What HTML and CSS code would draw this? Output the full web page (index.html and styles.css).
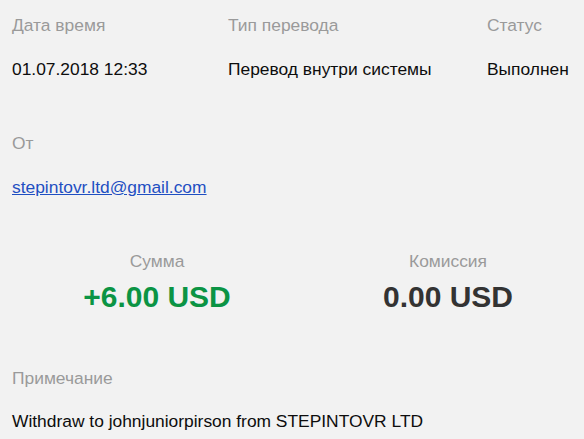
FILE: index.html
```html
<!DOCTYPE html>
<html lang="ru">
<head>
<meta charset="utf-8">
<title>Перевод</title>
<link rel="stylesheet" href="styles.css">
</head>
<body>
<div class="page">
  <div class="info-grid">
    <div class="cell">
      <div class="label">Дата время</div>
      <div class="value">01.07.2018 12:33</div>
    </div>
    <div class="cell">
      <div class="label">Тип перевода</div>
      <div class="value">Перевод внутри системы</div>
    </div>
    <div class="cell">
      <div class="label">Статус</div>
      <div class="value">Выполнен</div>
    </div>
  </div>

  <div class="cell">
    <div class="label">От</div>
    <div class="value"><a class="link" href="#">stepintovr.ltd@gmail.com</a></div>
  </div>

  <div class="amounts">
    <div class="amount-cell">
      <div class="label">Сумма</div>
      <div class="amount positive">+6.00 USD</div>
    </div>
    <div class="amount-cell">
      <div class="label">Комиссия</div>
      <div class="amount">0.00 USD</div>
    </div>
  </div>

  <div class="cell note">
    <div class="label">Примечание</div>
    <div class="value">Withdraw to johnjuniorpirson from STEPINTOVR LTD</div>
  </div>
</div>
</body>
</html>
```

FILE: styles.css
```css
html {
  overflow: hidden;
  background: #f2f2f2;
}
body {
  margin: 0;
  background: #f2f2f2;
  font-family: "Liberation Sans", Arial, sans-serif;
  font-size: 17.4px;
  line-height: 20px;
  color: #111;
}
.page {
  padding: 15px 0 0 12px;
  display: flex;
  flex-direction: column;
  gap: 54px;
}
.info-grid {
  display: grid;
  grid-template-columns: 216px 259px 1fr;
}
.cell {
  display: flex;
  flex-direction: column;
  gap: 24px;
}
.cell.note {
  gap: 23px;
}
.label {
  color: #9a9a9a;
}
.value {
  color: #0d0d0d;
  white-space: nowrap;
}
.link {
  color: #1f4fc2;
  text-decoration: underline;
}
.amounts {
  display: grid;
  grid-template-columns: 290px 292px;
  text-align: center;
}
.amount-cell {
  display: flex;
  flex-direction: column;
  gap: 9px;
}
.amount {
  font-size: 30px;
  line-height: 34px;
  font-weight: bold;
  color: #333333;
  white-space: nowrap;
}
.amount.positive {
  color: #0b9444;
}
```
